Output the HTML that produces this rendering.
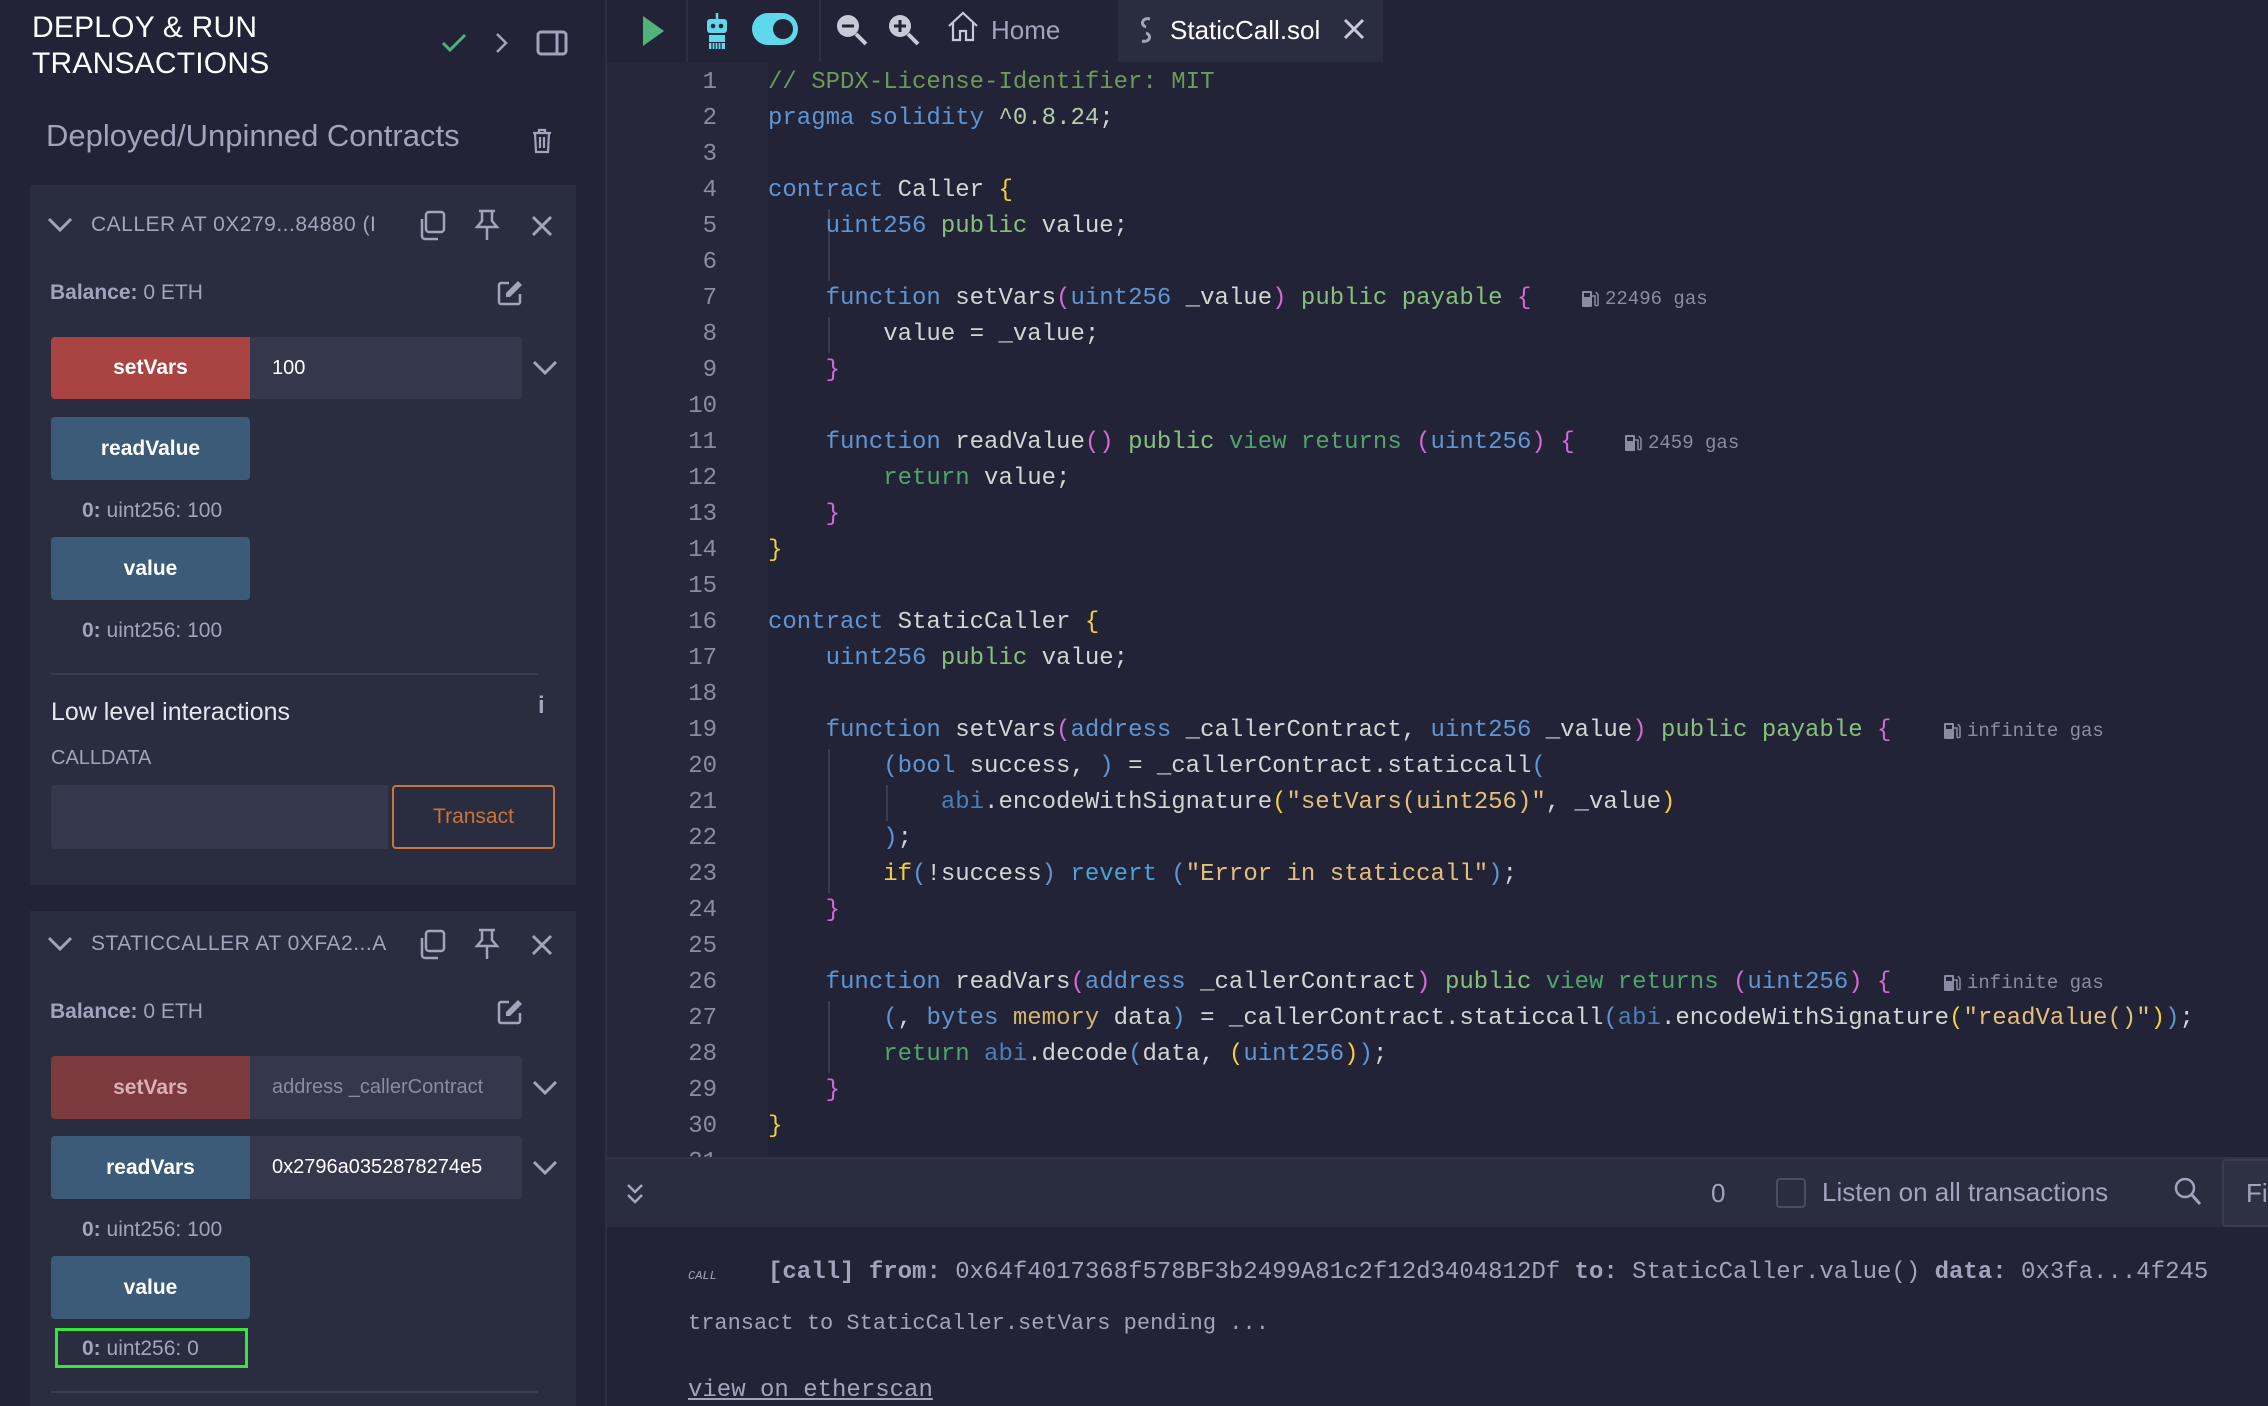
<!DOCTYPE html>
<html><head><meta charset="utf-8">
<style>
*{margin:0;padding:0;box-sizing:border-box}
body{width:2268px;height:1406px;overflow:hidden;background:#222336;font-family:"Liberation Sans",sans-serif;position:relative;color:#d4d4d4}
.a{position:absolute}
#left{left:0;top:0;width:607px;height:1406px;background:#222336;border-right:2px solid #2d2f44}
.title{left:32px;top:10px;font-size:30px;line-height:36px;color:#fff;letter-spacing:0.2px}
.card{background:#2a2c3f;left:30px;width:546px}
.hdr{font-size:21px;color:#a2a3bd;letter-spacing:0.5px}
.lbl{font-size:21px;color:#a2a3bd}
.btn{border-radius:4px;color:#fff;font-weight:bold;font-size:21px;display:flex;align-items:center;justify-content:center}
.red{background:#a94442}
.blue{background:#3c5b78}
.inp{background:#35374c;color:#fff;font-size:20px;display:flex;align-items:center;padding-left:22px;border-radius:0 4px 4px 0}
.res{font-size:21px;color:#a2a3bd}
.res b{color:#a2a3bd}
#code{left:607px;top:62px;width:1661px;height:1095px;overflow:hidden;background:#222336}
#gut{left:0;top:0;width:161px;height:1095px;background:#262839}
pre{font-family:"Liberation Mono",monospace;font-size:24px;line-height:36px}
.ln{position:absolute;left:0;top:3px;width:110px;text-align:right;color:#8a8ca3}
.src{position:absolute;left:161px;top:3px;color:#d4d4d4}
.c{color:#6e9a58}.k{color:#5f95d3}.g{color:#86c07a}.gd{color:#4fa46c}.y{color:#f2cf3b}.p{color:#d36ad6}.b{color:#5f95d3}.s{color:#e2c07a}.v{color:#b5cea8}.m{color:#d7b46a}.ab{color:#4b7fb8}.rv{color:#4aa3d6}
.gas{position:absolute;font-family:"Liberation Mono",monospace;font-size:19px;color:#8a8ca3;display:flex;align-items:center;gap:6px}
#term{left:607px;top:1157px;width:1661px;height:249px;background:#222336}
.tt{font-family:"Liberation Mono",monospace;font-size:24px;color:#a2a3bd;position:absolute;white-space:pre}
</style></head><body>

<div id="left" class="a">
  <div class="a title">DEPLOY &amp; RUN<br>TRANSACTIONS</div>
  <svg class="a" style="left:440px;top:31px" width="28" height="24" viewBox="0 0 28 24"><path d="M3 12l7 7L25 4" stroke="#4fb37a" stroke-width="3" fill="none"/></svg>
  <svg class="a" style="left:494px;top:31px" width="16" height="24" viewBox="0 0 16 24"><path d="M3 3l9 9-9 9" stroke="#a2a3bd" stroke-width="2.5" fill="none"/></svg>
  <svg class="a" style="left:536px;top:29px" width="32" height="28" viewBox="0 0 32 28"><rect x="2" y="3" width="28" height="22" rx="3" stroke="#a2a3bd" stroke-width="3" fill="none"/><line x1="21" y1="3" x2="21" y2="25" stroke="#a2a3bd" stroke-width="3"/></svg>
  <div class="a" style="left:46px;top:118px;font-size:31px;color:#a2a3bd">Deployed/Unpinned Contracts</div>
  <svg class="a" style="left:530px;top:127px" width="24" height="28" viewBox="0 0 24 28"><path d="M3 6h18M9 6V3h6v3M5 6l1 19h12l1-19M10 10v11M14 10v11" stroke="#a2a3bd" stroke-width="2.2" fill="none"/></svg>

  <div class="a card" style="top:185px;height:700px"></div>
  <svg class="a" style="left:47px;top:216px" width="26" height="18" viewBox="0 0 26 18"><path d="M2 3l11 11L24 3" stroke="#a2a3bd" stroke-width="3" fill="none"/></svg>
  <div class="a hdr" style="left:91px;top:213px">CALLER AT 0X279...84880 (I</div>
  <svg class="a" style="left:417px;top:210px" width="30" height="32" viewBox="0 0 30 32"><rect x="9" y="2" width="18" height="20" rx="3" stroke="#a2a3bd" stroke-width="2.5" fill="none"/><path d="M5 9v17a3 3 0 0 0 3 3h13" stroke="#a2a3bd" stroke-width="2.5" fill="none"/></svg>
  <svg class="a" style="left:473px;top:208px" width="28" height="34" viewBox="0 0 28 34"><path d="M6 3h16M9 3v10l-5 6h20l-5-6V3M14 19v13" stroke="#a2a3bd" stroke-width="2.5" fill="none"/></svg>
  <svg class="a" style="left:530px;top:214px" width="24" height="24" viewBox="0 0 24 24"><path d="M3 3l18 18M21 3L3 21" stroke="#a2a3bd" stroke-width="3"/></svg>
  <div class="a lbl" style="left:50px;top:281px"><b>Balance:</b> 0 ETH</div>
  <svg class="a" style="left:496px;top:279px" width="28" height="28" viewBox="0 0 28 28"><path d="M13 4H5a2 2 0 0 0-2 2v17a2 2 0 0 0 2 2h17a2 2 0 0 0 2-2v-8" stroke="#a2a3bd" stroke-width="2.5" fill="none"/><path d="M22 2l4 4-12 12h-4v-4z" fill="#a2a3bd"/></svg>
  <div class="a btn red" style="left:51px;top:337px;width:199px;height:62px;border-radius:4px 0 0 4px">setVars</div>
  <div class="a inp" style="left:250px;top:337px;width:272px;height:62px">100</div>
  <svg class="a" style="left:532px;top:359px" width="26" height="18" viewBox="0 0 26 18"><path d="M2 3l11 11L24 3" stroke="#a2a3bd" stroke-width="3" fill="none"/></svg>
  <div class="a btn blue" style="left:51px;top:417px;width:199px;height:63px">readValue</div>
  <div class="a res" style="left:82px;top:499px"><b>0:</b> uint256: 100</div>
  <div class="a btn blue" style="left:51px;top:537px;width:199px;height:63px">value</div>
  <div class="a res" style="left:82px;top:619px"><b>0:</b> uint256: 100</div>
  <div class="a" style="left:51px;top:673px;width:487px;height:2px;background:#3a3c52"></div>
  <div class="a" style="left:51px;top:698px;font-size:25px;color:#e6e6ef">Low level interactions</div>
  <div class="a" style="left:538px;top:692px;font-size:24px;color:#a2a3bd;font-weight:bold">i</div>
  <div class="a" style="left:51px;top:747px;font-size:20px;color:#a2a3bd">CALLDATA</div>
  <div class="a" style="left:51px;top:785px;width:337px;height:64px;background:#35374c;border-radius:4px 0 0 4px"></div>
  <div class="a" style="left:392px;top:785px;width:163px;height:64px;border:2px solid #c97539;border-radius:4px;color:#c97539;font-size:21px;display:flex;align-items:center;justify-content:center">Transact</div>

  <div class="a card" style="top:911px;height:495px"></div>
  <svg class="a" style="left:47px;top:935px" width="26" height="18" viewBox="0 0 26 18"><path d="M2 3l11 11L24 3" stroke="#a2a3bd" stroke-width="3" fill="none"/></svg>
  <div class="a hdr" style="left:91px;top:932px">STATICCALLER AT 0XFA2...A</div>
  <svg class="a" style="left:417px;top:929px" width="30" height="32" viewBox="0 0 30 32"><rect x="9" y="2" width="18" height="20" rx="3" stroke="#a2a3bd" stroke-width="2.5" fill="none"/><path d="M5 9v17a3 3 0 0 0 3 3h13" stroke="#a2a3bd" stroke-width="2.5" fill="none"/></svg>
  <svg class="a" style="left:473px;top:927px" width="28" height="34" viewBox="0 0 28 34"><path d="M6 3h16M9 3v10l-5 6h20l-5-6V3M14 19v13" stroke="#a2a3bd" stroke-width="2.5" fill="none"/></svg>
  <svg class="a" style="left:530px;top:933px" width="24" height="24" viewBox="0 0 24 24"><path d="M3 3l18 18M21 3L3 21" stroke="#a2a3bd" stroke-width="3"/></svg>
  <div class="a lbl" style="left:50px;top:1000px"><b>Balance:</b> 0 ETH</div>
  <svg class="a" style="left:496px;top:998px" width="28" height="28" viewBox="0 0 28 28"><path d="M13 4H5a2 2 0 0 0-2 2v17a2 2 0 0 0 2 2h17a2 2 0 0 0 2-2v-8" stroke="#a2a3bd" stroke-width="2.5" fill="none"/><path d="M22 2l4 4-12 12h-4v-4z" fill="#a2a3bd"/></svg>
  <div class="a btn" style="left:51px;top:1056px;width:199px;height:63px;border-radius:4px 0 0 4px;background:#7d3a3e;color:#d9b0b4">setVars</div>
  <div class="a inp" style="left:250px;top:1056px;width:272px;height:63px;color:#8a8ca3;white-space:nowrap;overflow:hidden">address _callerContract</div>
  <svg class="a" style="left:532px;top:1079px" width="26" height="18" viewBox="0 0 26 18"><path d="M2 3l11 11L24 3" stroke="#a2a3bd" stroke-width="3" fill="none"/></svg>
  <div class="a btn blue" style="left:51px;top:1136px;width:199px;height:63px;border-radius:4px 0 0 4px">readVars</div>
  <div class="a inp" style="left:250px;top:1136px;width:272px;height:63px;white-space:nowrap;overflow:hidden">0x2796a0352878274e5</div>
  <svg class="a" style="left:532px;top:1159px" width="26" height="18" viewBox="0 0 26 18"><path d="M2 3l11 11L24 3" stroke="#a2a3bd" stroke-width="3" fill="none"/></svg>
  <div class="a res" style="left:82px;top:1218px"><b>0:</b> uint256: 100</div>
  <div class="a btn blue" style="left:51px;top:1256px;width:199px;height:63px">value</div>
  <div class="a" style="left:55px;top:1328px;width:193px;height:40px;border:3px solid #39e639"></div>
  <div class="a res" style="left:82px;top:1337px"><b>0:</b> uint256: 0</div>
  <div class="a" style="left:51px;top:1391px;width:487px;height:2px;background:#3a3c52"></div>
</div>

<div class="a" style="left:609px;top:0;width:1659px;height:62px;background:#222336"></div>
<div class="a" style="left:686px;top:0;width:2px;height:62px;background:#2d2f44"></div>
<div class="a" style="left:819px;top:0;width:2px;height:62px;background:#2d2f44"></div>
<div class="a" style="left:1118px;top:0;width:265px;height:62px;background:#2a2c3f"></div>
<svg class="a" style="left:640px;top:14px" width="26" height="34" viewBox="0 0 26 34"><path d="M3 2l21 15L3 32z" fill="#4fb37a"/></svg>
<svg class="a" style="left:702px;top:12px" width="30" height="38" viewBox="0 0 30 38"><line x1="15" y1="1" x2="15" y2="7" stroke="#5fd8ec" stroke-width="2.5"/><rect x="5" y="7" width="20" height="14" rx="3" fill="#5fd8ec"/><circle cx="11" cy="14" r="2.3" fill="#222336"/><circle cx="19" cy="14" r="2.3" fill="#222336"/><rect x="7" y="23" width="16" height="7" fill="#5fd8ec"/><rect x="7" y="31" width="16" height="6" fill="#5fd8ec"/><path d="M10 31v6M13 31v6M16 31v6M19 31v6" stroke="#222336" stroke-width="1.2"/></svg>
<div class="a" style="left:752px;top:13px;width:46px;height:32px;border-radius:16px;background:#5fd8ec"></div>
<div class="a" style="left:773px;top:19px;width:20px;height:20px;border-radius:10px;background:#222336"></div>
<svg class="a" style="left:834px;top:12px" width="36" height="36" viewBox="0 0 36 36"><circle cx="14" cy="14" r="11" fill="#c8c9d6"/><path d="M22 22l10 10" stroke="#c8c9d6" stroke-width="4"/><path d="M8 14h12" stroke="#222336" stroke-width="3"/></svg>
<svg class="a" style="left:886px;top:12px" width="36" height="36" viewBox="0 0 36 36"><circle cx="14" cy="14" r="11" fill="#c8c9d6"/><path d="M22 22l10 10" stroke="#c8c9d6" stroke-width="4"/><path d="M8 14h12M14 8v12" stroke="#222336" stroke-width="3"/></svg>
<svg class="a" style="left:946px;top:10px" width="34" height="32" viewBox="0 0 34 32"><path d="M3 16L17 3l14 13M7 13v17h7v-9h6v9h7V13" stroke="#c8c9d6" stroke-width="2.2" fill="none"/></svg>
<div class="a" style="left:991px;top:15px;font-size:26px;color:#a2a3bd">Home</div>
<svg class="a" style="left:1138px;top:15px" width="16" height="30" viewBox="0 0 16 30"><path d="M12 4C4 2 2 10 8 12" stroke="#a2a3bd" stroke-width="3" fill="none"/><path d="M4 26c8 2 10-6 4-8" stroke="#a2a3bd" stroke-width="3" fill="none"/></svg>
<div class="a" style="left:1170px;top:15px;font-size:26px;color:#fff">StaticCall.sol</div>
<svg class="a" style="left:1342px;top:17px" width="24" height="24" viewBox="0 0 24 24"><path d="M3 3l18 18M21 3L3 21" stroke="#c8c9d6" stroke-width="3"/></svg>

<div id="code" class="a">
<div id="gut" class="a"></div>
<div class="a" style="left:221px;top:147px;width:2px;height:72px;background:#3a3c52"></div>
<div class="a" style="left:221px;top:255px;width:2px;height:36px;background:#3a3c52"></div>
<div class="a" style="left:221px;top:687px;width:2px;height:144px;background:#3a3c52"></div>
<div class="a" style="left:279px;top:723px;width:2px;height:36px;background:#3a3c52"></div>
<div class="a" style="left:221px;top:939px;width:2px;height:72px;background:#3a3c52"></div>
<pre class="ln">1
2
3
4
5
6
7
8
9
10
11
12
13
14
15
16
17
18
19
20
21
22
23
24
25
26
27
28
29
30
31</pre>
<pre class="src"><span class="c">// SPDX-License-Identifier: MIT</span>
<span class="k">pragma solidity</span> <span class="v">^0.8.24</span>;

<span class="k">contract</span> Caller <span class="y">{</span>
    <span class="k">uint256</span> <span class="g">public</span> value;

    <span class="k">function</span> setVars<span class="p">(</span><span class="k">uint256</span> _value<span class="p">)</span> <span class="g">public payable</span> <span class="p">{</span>
        value = _value;
    <span class="p">}</span>

    <span class="k">function</span> readValue<span class="p">()</span> <span class="g">public</span> <span class="gd">view returns</span> <span class="p">(</span><span class="k">uint256</span><span class="p">)</span> <span class="p">{</span>
        <span class="gd">return</span> value;
    <span class="p">}</span>
<span class="y">}</span>

<span class="k">contract</span> StaticCaller <span class="y">{</span>
    <span class="k">uint256</span> <span class="g">public</span> value;

    <span class="k">function</span> setVars<span class="p">(</span><span class="k">address</span> _callerContract, <span class="k">uint256</span> _value<span class="p">)</span> <span class="g">public payable</span> <span class="p">{</span>
        <span class="b">(</span><span class="k">bool</span> success, <span class="b">)</span> = _callerContract.staticcall<span class="b">(</span>
            <span class="ab">abi</span>.encodeWithSignature<span class="y">(</span><span class="s">"setVars(uint256)"</span>, _value<span class="y">)</span>
        <span class="b">)</span>;
        <span class="y">if</span><span class="b">(</span>!success<span class="b">)</span> <span class="rv">revert</span> <span class="b">(</span><span class="s">"Error in staticcall"</span><span class="b">)</span>;
    <span class="p">}</span>

    <span class="k">function</span> readVars<span class="p">(</span><span class="k">address</span> _callerContract<span class="p">)</span> <span class="g">public</span> <span class="gd">view returns</span> <span class="p">(</span><span class="k">uint256</span><span class="p">)</span> <span class="p">{</span>
        <span class="b">(</span>, <span class="k">bytes</span> <span class="m">memory</span> data<span class="b">)</span> = _callerContract.staticcall<span class="b">(</span><span class="ab">abi</span>.encodeWithSignature<span class="y">(</span><span class="s">"readValue()"</span><span class="y">)</span><span class="b">)</span>;
        <span class="gd">return</span> <span class="ab">abi</span>.decode<span class="b">(</span>data, <span class="y">(</span><span class="k">uint256</span><span class="y">)</span><span class="b">)</span>;
    <span class="p">}</span>
<span class="y">}</span>
</pre>
<div class="gas" style="left:974px;top:226px"><svg width="18" height="20" viewBox="0 0 18 20"><rect x="1" y="2" width="10" height="16" rx="1" fill="#8a8ca3"/><rect x="3" y="4" width="6" height="4" fill="#222336"/><path d="M11 7h3v9a2 2 0 0 0 3 0V6l-2-3" stroke="#8a8ca3" stroke-width="1.5" fill="none"/></svg>22496 gas</div>
<div class="gas" style="left:1017px;top:370px"><svg width="18" height="20" viewBox="0 0 18 20"><rect x="1" y="2" width="10" height="16" rx="1" fill="#8a8ca3"/><rect x="3" y="4" width="6" height="4" fill="#222336"/><path d="M11 7h3v9a2 2 0 0 0 3 0V6l-2-3" stroke="#8a8ca3" stroke-width="1.5" fill="none"/></svg>2459 gas</div>
<div class="gas" style="left:1336px;top:658px"><svg width="18" height="20" viewBox="0 0 18 20"><rect x="1" y="2" width="10" height="16" rx="1" fill="#8a8ca3"/><rect x="3" y="4" width="6" height="4" fill="#222336"/><path d="M11 7h3v9a2 2 0 0 0 3 0V6l-2-3" stroke="#8a8ca3" stroke-width="1.5" fill="none"/></svg>infinite gas</div>
<div class="gas" style="left:1336px;top:910px"><svg width="18" height="20" viewBox="0 0 18 20"><rect x="1" y="2" width="10" height="16" rx="1" fill="#8a8ca3"/><rect x="3" y="4" width="6" height="4" fill="#222336"/><path d="M11 7h3v9a2 2 0 0 0 3 0V6l-2-3" stroke="#8a8ca3" stroke-width="1.5" fill="none"/></svg>infinite gas</div>
</div>

<div id="term" class="a">
  <div class="a" style="left:0;top:0;width:1661px;height:70px;background:#2a2c3f;border-top:2px solid #30324a"></div>
  <svg class="a" style="left:18px;top:25px" width="20" height="26" viewBox="0 0 20 26"><path d="M3 3l7 7 7-7M3 13l7 7 7-7" stroke="#a2a3bd" stroke-width="2.5" fill="none"/></svg>
  <div class="a" style="left:1104px;top:21px;font-size:26px;color:#a2a3bd">0</div>
  <div class="a" style="left:1169px;top:21px;width:30px;height:30px;border:2px solid #4a4c62;border-radius:4px;background:#2a2c3f"></div>
  <div class="a" style="left:1215px;top:20px;font-size:26px;color:#a2a3bd">Listen on all transactions</div>
  <svg class="a" style="left:1566px;top:19px" width="30" height="32" viewBox="0 0 30 32"><circle cx="12" cy="12" r="9" stroke="#a2a3bd" stroke-width="2.5" fill="none"/><path d="M19 19l8 9" stroke="#a2a3bd" stroke-width="3"/></svg>
  <div class="a" style="left:1615px;top:2px;width:46px;height:68px;background:#2e3044;border:2px solid #3a3c52;border-right:none;border-radius:4px 0 0 4px;font-size:26px;color:#a2a3bd;padding:17px 0 0 22px;overflow:hidden">Fi</div>
  <div class="a" style="left:81px;top:112px;font-family:'Liberation Mono',monospace;font-size:12px;color:#a2a3bd;font-style:italic">CALL</div>
  <div class="tt" style="left:161px;top:102px"><b>[call]</b> <b>from:</b> 0x64f4017368f578BF3b2499A81c2f12d3404812Df <b>to:</b> StaticCaller.value() <b>data:</b> 0x3fa...4f245</div>
  <div class="tt" style="left:81px;top:154px;font-size:22px">transact to StaticCaller.setVars pending ...</div>
  <div class="tt" style="left:81px;top:220px;text-decoration:underline">view on etherscan</div>
</div>
</body></html>
